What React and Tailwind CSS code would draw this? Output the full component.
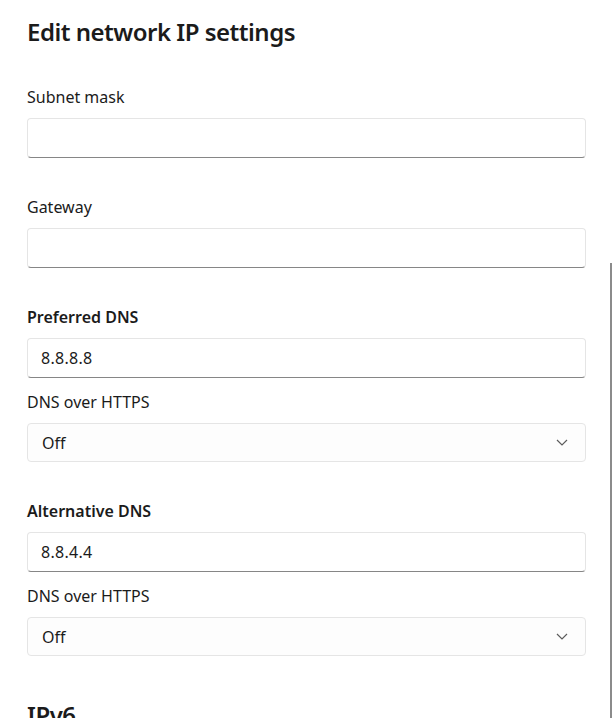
import React from 'react';

const font = { fontFamily: '"Noto Sans", "Open Sans", sans-serif' };

function Label({ children, bold }) {
  return (
    <div className={`text-[16px] leading-[22px] text-[#1b1b1b] ${bold ? 'font-semibold' : ''}`}>
      {children}
    </div>
  );
}

function TextBox({ value }) {
  return (
    <div className="mt-[10px] h-[40px] rounded-[4px] border border-[#e5e5e5] border-b-[#868686] bg-white pl-[13px] flex items-center text-[16px] tracking-[0.3px] text-[#1b1b1b]">
      {value}
    </div>
  );
}

function Dropdown({ value }) {
  return (
    <div className="mt-[10px] h-[39px] rounded-[4px] border border-[#e5e5e5] bg-[#fdfdfd] pl-[14px] pr-[17px] flex items-center justify-between text-[16px] text-[#1b1b1b]">
      <span>{value}</span>
      <svg width="12" height="7" viewBox="0 0 12 7" fill="none">
        <path d="M1 1 L6 6 L11 1" stroke="#5c5c5c" strokeWidth="1.2" />
      </svg>
    </div>
  );
}

export default function App() {
  return (
    <div className="relative h-[718px] overflow-hidden bg-white" style={font}>
      <div className="px-[27px] pt-[16px]">
        <h1 className="text-[24px] leading-[32px] font-semibold tracking-[-0.5px] text-[#1b1b1b]">Edit network IP settings</h1>

        <div className="mt-[38px]">
          <Label>Subnet mask</Label>
          <TextBox value="" />
        </div>

        <div className="mt-[38px]">
          <Label>Gateway</Label>
          <TextBox value="" />
        </div>

        <div className="mt-[38px]">
          <Label bold>Preferred DNS</Label>
          <TextBox value="8.8.8.8" />
          <div className="mt-[13px]">
            <Label>DNS over HTTPS</Label>
            <Dropdown value="Off" />
          </div>
        </div>

        <div className="mt-[38px]">
          <Label bold>Alternative DNS</Label>
          <TextBox value="8.8.4.4" />
          <div className="mt-[13px]">
            <Label>DNS over HTTPS</Label>
            <Dropdown value="Off" />
          </div>
        </div>

        <h2 className="mt-[43px] text-[24px] leading-[32px] font-semibold tracking-[-0.5px] text-[#1b1b1b]">IPv6</h2>
      </div>

      <div className="absolute right-[1px] top-[263px] bottom-0 w-[2px] bg-[#8b8b8b]" />
    </div>
  );
}
